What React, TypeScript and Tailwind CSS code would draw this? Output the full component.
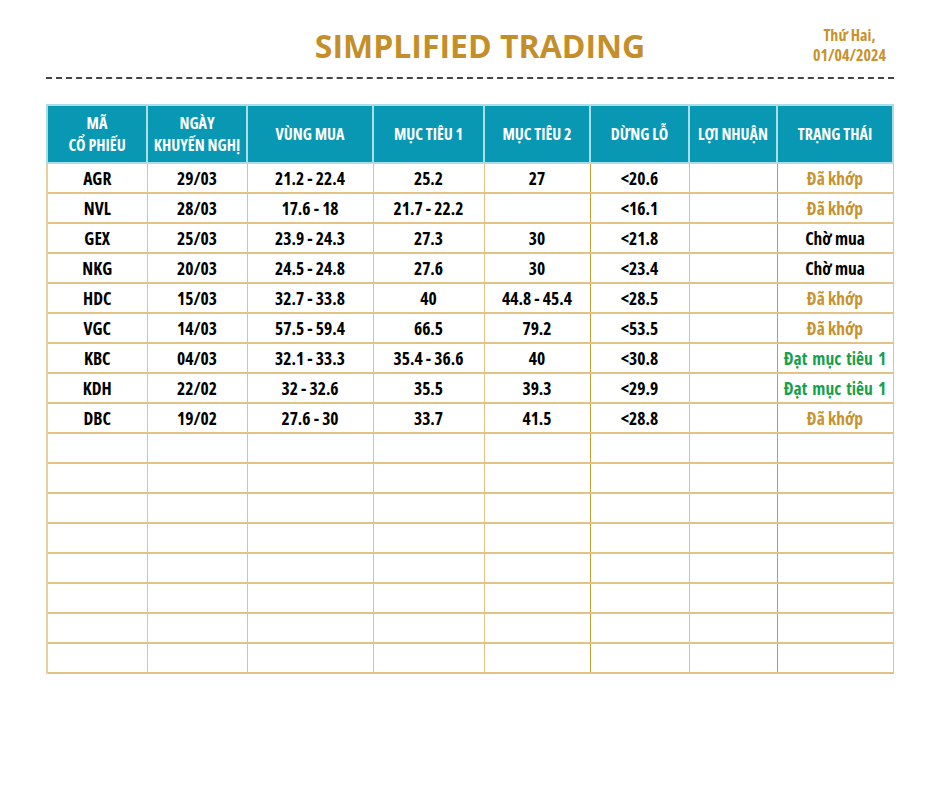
import React from 'react';

type Status = 'matched' | 'waiting' | 'target1';

interface Pick {
  readonly code: string;
  readonly date: string;
  readonly buyZone: string;
  readonly target1: string;
  readonly target2: string;
  readonly stopLoss: string;
  readonly profit: string;
  readonly status: Status;
}

const PICKS: Pick[] = [
  { code: 'AGR', date: '29/03', buyZone: '21.2 - 22.4', target1: '25.2', target2: '27', stopLoss: '<20.6', profit: '', status: 'matched' },
  { code: 'NVL', date: '28/03', buyZone: '17.6 - 18', target1: '21.7 - 22.2', target2: '', stopLoss: '<16.1', profit: '', status: 'matched' },
  { code: 'GEX', date: '25/03', buyZone: '23.9 - 24.3', target1: '27.3', target2: '30', stopLoss: '<21.8', profit: '', status: 'waiting' },
  { code: 'NKG', date: '20/03', buyZone: '24.5 - 24.8', target1: '27.6', target2: '30', stopLoss: '<23.4', profit: '', status: 'waiting' },
  { code: 'HDC', date: '15/03', buyZone: '32.7 - 33.8', target1: '40', target2: '44.8 - 45.4', stopLoss: '<28.5', profit: '', status: 'matched' },
  { code: 'VGC', date: '14/03', buyZone: '57.5 - 59.4', target1: '66.5', target2: '79.2', stopLoss: '<53.5', profit: '', status: 'matched' },
  { code: 'KBC', date: '04/03', buyZone: '32.1 - 33.3', target1: '35.4 - 36.6', target2: '40', stopLoss: '<30.8', profit: '', status: 'target1' },
  { code: 'KDH', date: '22/02', buyZone: '32 - 32.6', target1: '35.5', target2: '39.3', stopLoss: '<29.9', profit: '', status: 'target1' },
  { code: 'DBC', date: '19/02', buyZone: '27.6 - 30', target1: '33.7', target2: '41.5', stopLoss: '<28.8', profit: '', status: 'matched' },
];

const EMPTY_ROWS = 8;

const STATUS_LABEL: Record<Status, string> = {
  matched: 'Đã khớp',
  waiting: 'Chờ mua',
  target1: 'Đạt mục tiêu 1',
};

const STATUS_COLOR: Record<Status, string> = {
  matched: 'text-[#c8922c]',
  waiting: 'text-black',
  target1: 'text-[#17a04c] [word-spacing:2px]',
};

// column widths + whether the right-hand divider is the darker gold
const COLS = [
  { w: 'w-[100px]', dark: false },
  { w: 'w-[100px]', dark: false },
  { w: 'w-[126px]', dark: false },
  { w: 'w-[111px]', dark: false },
  { w: 'w-[106px]', dark: true },
  { w: 'w-[99px]', dark: false },
  { w: 'w-[88px]', dark: true },
  { w: 'w-[116px]', dark: false },
];

const HEADINGS = [
  ['MÃ', 'CỔ PHIẾU'],
  ['NGÀY', 'KHUYẾN NGHỊ'],
  ['VÙNG MUA'],
  ['MỤC TIÊU 1'],
  ['MỤC TIÊU 2'],
  ['DỪNG LỖ'],
  ['LỢI NHUẬN'],
  ['TRẠNG THÁI'],
];

const cellBorder = (i: number) =>
  COLS[i].dark ? 'border-r border-r-[#cc9a34]' : 'border-r border-r-[#e2c384]';

export default function App() {
  const rows: (Pick | null)[] = [...PICKS, ...Array.from({ length: EMPTY_ROWS }, () => null)];

  return (
    <div
      className="h-[788px] w-[940px] bg-white"
      style={{ fontFamily: '"Open Sans", "Noto Sans", sans-serif' }}
    >
      {/* Header */}
      <div className="relative px-[46px] pt-[25px]">
        <h1 className="pl-[20px] text-center text-[32px] font-bold leading-[42px] text-[#c48f2a]">SIMPLIFIED TRADING</h1>
        <div className="absolute right-[54px] top-[25px] text-center text-[16px] font-bold leading-[20px] text-[#c8922c] font-stretch-condensed">
          <div>Thứ Hai,</div>
          <div>01/04/2024</div>
        </div>
        <div className="mt-[10px] border-t-2 border-dashed border-[#444]" />
      </div>

      {/* Table */}
      <div className="px-[46px] pt-[25px]">
        <table className="w-[846px] table-fixed border-collapse font-stretch-condensed">
          <thead>
            <tr className="h-[58px] bg-[#0898b4] text-white">
              {HEADINGS.map((lines, i) => (
                <th
                  key={i}
                  className={`${COLS[i].w} border-2 border-[#a9dde8] p-0 text-center text-[16px] font-bold leading-[22px]`}
                >
                  {lines.map((l) => (
                    <div key={l}>{l}</div>
                  ))}
                </th>
              ))}
            </tr>
          </thead>
          <tbody>
            {rows.map((r, ri) => {
              const cells = r
                ? [r.code, r.date, r.buyZone, r.target1, r.target2, r.stopLoss, r.profit]
                : ['', '', '', '', '', '', ''];
              return (
                <tr key={ri} className="h-[30px] border-b-2 border-b-[#e2c384]">
                  {cells.map((c, ci) => (
                    <td
                      key={ci}
                      className={`${cellBorder(ci)} ${ci === 0 ? 'border-l-2 border-l-[#e8d09c]' : ''} p-0 text-center text-[17.5px] font-bold leading-[22px] text-black`}
                    >
                      {c}
                    </td>
                  ))}
                  <td className={`${cellBorder(7)} p-0 text-center text-[17.5px] font-bold leading-[22px] ${r ? STATUS_COLOR[r.status] : ''}`}>
                    {r ? STATUS_LABEL[r.status] : ''}
                  </td>
                </tr>
              );
            })}
          </tbody>
        </table>
      </div>
    </div>
  );
}
